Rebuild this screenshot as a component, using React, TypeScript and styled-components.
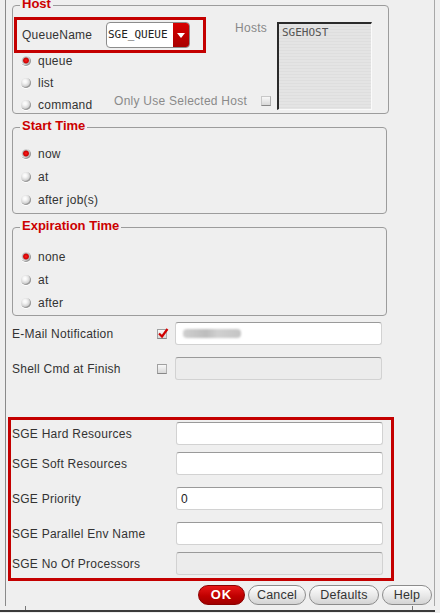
import React from "react";
import styled, { createGlobalStyle } from "styled-components";

const Global = createGlobalStyle`
  html, body { margin: 0; padding: 0; }
  body {
    width: 440px; height: 613px; overflow: hidden;
    background: #efefef;
    font-family: "Liberation Sans", Arial, sans-serif;
    font-size: 12px; color: #333;
  }
`;

const Page = styled.div`
  width: 440px; height: 613px; box-sizing: border-box;
  background: #efefef;
  padding-left: 5px;
  display: flex; flex-direction: column;
`;

const Pane = styled.div`
  width: 430px; height: 606px; box-sizing: border-box;
  border-left: 1px solid #8a8a8a;
  border-right: 1px solid #a8a8a8;
  padding-left: 6px;
  display: flex; flex-direction: column;
  overflow: hidden;
`;

const Footer = styled.div`
  height: 4px; width: 435px; margin-left: -5px;
  border-bottom: 2px solid #3a3a3a;
  display: flex;
`;

const Tick = styled.span<{ $x: number }>`
  width: 1px; height: 4px; background: #777; margin-left: ${p => p.$x}px;
`;

const Frame = styled.div<{ $w: number; $h: number; $mt: number; $pt?: number }>`
  position: relative;
  box-sizing: border-box;
  width: ${p => p.$w}px; height: ${p => p.$h}px;
  margin-top: ${p => p.$mt}px;
  padding-top: ${p => p.$pt ?? 0}px;
  border: 1px solid #9c9c9c;
  border-radius: 4px;
  flex-shrink: 0;
`;

const Legend = styled.span`
  position: absolute; top: -10px; left: 7px;
  padding: 0 2px;
  background: #efefef;
  color: #cc0000; font-weight: bold; font-size: 13px; line-height: 15px;
`;

const HostBody = styled.div`
  display: flex;
`;

const HostLeft = styled.div`
  width: 262px;
  display: flex; flex-direction: column;
`;

const HostTop = styled.div`
  display: flex; margin-top: 11px;
`;

const Highlight = styled.div`
  box-sizing: border-box;
  width: 192px; height: 36px; margin-left: 1px;
  border: 3px solid #c40000;
  display: flex; align-items: center;
  padding-left: 5px; padding-right: 13px;
`;

const Label = styled.span<{ $muted?: boolean }>`
  color: ${p => (p.$muted ? "#8a8a8a" : "#333")};
  white-space: nowrap;
  letter-spacing: 0.25px;
`;

const HostsLabel = styled(Label)`
  margin-left: auto; margin-right: 8px; margin-top: 4px;
  color: #888;
`;

const Select = styled.div`
  margin-left: auto;
  width: 84px; height: 26px; box-sizing: border-box;
  display: flex;
  border: 1px solid #8c8c8c; border-radius: 4px;
  background: #fff; overflow: hidden;
`;

const SelectText = styled.span`
  flex: 1; padding-left: 1px;
  font-family: "DejaVu Sans Mono", "Liberation Mono", monospace; font-size: 11px; color: #222;
  line-height: 24px; white-space: nowrap;
`;

const SelectBtn = styled.span`
  width: 16px; flex-shrink: 0;
  background: linear-gradient(#d80000, #a80000);
  display: flex; align-items: center; justify-content: center;
`;

const RadioList = styled.div<{ $mt?: number; $row: number }>`
  display: flex; flex-direction: column;
  margin-top: ${p => p.$mt ?? 0}px;
  padding-left: 8px;
  & > * { height: ${p => p.$row}px; }
`;

const RadioRow = styled.div`
  display: flex; align-items: center;
`;

const Radio = styled.span<{ $on?: boolean }>`
  width: 10px; height: 10px; border-radius: 50%;
  box-sizing: border-box; flex-shrink: 0;
  margin-right: 7px;
  background: ${p =>
    p.$on
      ? "radial-gradient(circle at 50% 45%, #ff2020 0, #d00000 2.4px, #b8b8b8 3.4px, #f8f8f8 5px)"
      : "radial-gradient(circle at 40% 35%, #ffffff 0, #f4f4f4 2px, #cfcfcf 5px)"};
  box-shadow: inset -1px -1px 0 #999, 0 1px 0 #fff;
`;

const OnlyUse = styled.div`
  margin-left: auto; margin-right: 4px; margin-top: -8px;
  display: flex; align-items: center; gap: 14px;
`;

const Check = styled.span<{ $on?: boolean; $dim?: boolean }>`
  position: relative;
  width: 10px; height: 10px; box-sizing: border-box; flex-shrink: 0;
  border-top: 1px solid ${p => (p.$dim ? "#c8c8c8" : "#a0a0a0")};
  border-left: 1px solid ${p => (p.$dim ? "#c8c8c8" : "#a0a0a0")};
  border-bottom: 1px solid #888;
  border-right: 1px solid #b0b0b0;
  background: linear-gradient(#f8f8f8, #d8d8d8);
  svg { position: absolute; left: -1px; top: -3px; }
`;

const ListBox = styled.div`
  margin-top: 16px; margin-left: 2px;
  width: 95px; height: 88px; box-sizing: border-box;
  border-top: 2px solid #2a2a2a; border-left: 2px solid #2a2a2a;
  border-bottom: 1px solid #fafafa; border-right: 1px solid #fafafa;
  background: repeating-linear-gradient(#e4e4e4 0 2px, #dedede 2px 3px);
  padding: 2px 0 0 3px;
  font-family: "DejaVu Sans Mono", "Liberation Mono", monospace; font-size: 11px; color: #555;
  line-height: 14px;
`;

const FieldRow = styled.div<{ $mt: number; $label: number }>`
  display: grid;
  grid-template-columns: ${p => p.$label}px 18px 207px;
  align-items: center;
  height: 23px;
  margin-top: ${p => p.$mt}px;
  flex-shrink: 0;
`;

const Input = styled.div<{ $disabled?: boolean }>`
  grid-column: 3;
  height: 23px; box-sizing: border-box;
  border: 1px solid #d2d2d2; border-top-color: #9a9a9a;
  border-radius: 3px;
  background: ${p => (p.$disabled ? "#ececec" : "#ffffff")};
  padding-left: 4px;
  display: flex; align-items: center;
  font-size: 12px; color: #222;
`;

const Blur = styled.span`
  width: 58px; height: 9px; border-radius: 4px;
  background: linear-gradient(90deg, #cfcfcf, #bdbdbd 40%, #d0d0d0 60%, #c4c4c4);
  filter: blur(1px);
  margin-left: 3px;
`;

const SgeBox = styled.div`
  margin-top: 37px; margin-left: -4px;
  width: 386px; box-sizing: border-box;
  border: 3px solid #c40000;
  padding: 2px 0 3px 1px;
  display: flex; flex-direction: column;
  flex-shrink: 0;
`;

const Buttons = styled.div`
  display: flex; justify-content: flex-end; gap: 3px;
  margin-top: 4px; padding-right: 2px;
`;

const Button = styled.button<{ $w: number; $primary?: boolean }>`
  width: ${p => p.$w}px; height: 20px; box-sizing: border-box;
  border-radius: 10px;
  border: 1px solid ${p => (p.$primary ? "#8a0000" : "#8c8c8c")};
  background: ${p =>
    p.$primary
      ? "linear-gradient(#e81818, #c00000 55%, #a00000)"
      : "linear-gradient(#fdfdfd, #e8e8e8 55%, #d4d4d4)"};
  color: ${p => (p.$primary ? "#fff" : "#333")};
  font-family: "Liberation Sans", Arial, sans-serif;
  font-size: ${p => (p.$primary ? "13px" : "12.5px")};
  font-weight: ${p => (p.$primary ? "bold" : "normal")};
  letter-spacing: ${p => (p.$primary ? "1px" : "0.2px")};
  padding: 0;
  line-height: 18px;
`;

const CheckMark = () => (
  <svg width="12" height="12" viewBox="0 0 12 12">
    <path d="M2 6.5 L5 9.5 L10.5 2" fill="none" stroke="#d00000" strokeWidth="2.2" />
  </svg>
);

const Caret = () => (
  <svg width="8" height="5" viewBox="0 0 8 5">
    <path d="M0 0 H8 L4 5 Z" fill="#fff" />
  </svg>
);

const RadioGroup: React.FC<{ items: string[]; on: number; row: number }> = ({ items, on, row }) => (
  <RadioList $row={row}>
    {items.map((t, i) => (
      <RadioRow key={t}>
        <Radio $on={i === on} />
        <Label>{t}</Label>
      </RadioRow>
    ))}
  </RadioList>
);

export default function App() {
  return (
    <Page>
      <Global />
      <Pane>
        <Frame $w={377} $h={109} $mt={5}>
          <Legend>Host</Legend>
          <HostBody>
            <HostLeft>
              <HostTop>
                <Highlight>
                  <Label>QueueName</Label>
                  <Select>
                    <SelectText>SGE_QUEUE</SelectText>
                    <SelectBtn><Caret /></SelectBtn>
                  </Select>
                </Highlight>
                <HostsLabel>Hosts</HostsLabel>
              </HostTop>
              <RadioList $mt={-3} $row={22}>
                <RadioRow><Radio $on /><Label>queue</Label></RadioRow>
                <RadioRow><Radio /><Label>list</Label></RadioRow>
                <RadioRow>
                  <Radio /><Label>command</Label>
                  <OnlyUse>
                    <Label $muted>Only Use Selected Host</Label>
                    <Check $dim />
                  </OnlyUse>
                </RadioRow>
              </RadioList>
            </HostLeft>
            <ListBox>SGEHOST</ListBox>
          </HostBody>
        </Frame>

        <Frame $w={375} $h={87} $mt={13} $pt={14}>
          <Legend>Start Time</Legend>
          <RadioGroup items={["now", "at", "after job(s)"]} on={0} row={23} />
        </Frame>

        <Frame $w={375} $h={89} $mt={13} $pt={17}>
          <Legend>Expiration Time</Legend>
          <RadioGroup items={["none", "at", "after"]} on={0} row={23} />
        </Frame>

        <FieldRow $mt={6} $label={145}>
          <Label>E-Mail Notification</Label>
          <Check $on><CheckMark /></Check>
          <Input><Blur /></Input>
        </FieldRow>
        <FieldRow $mt={12} $label={145}>
          <Label>Shell Cmd at Finish</Label>
          <Check />
          <Input $disabled />
        </FieldRow>

        <SgeBox>
          <FieldRow $mt={0} $label={146}>
            <Label>SGE Hard Resources</Label>
            <Input />
          </FieldRow>
          <FieldRow $mt={7} $label={146}>
            <Label>SGE Soft Resources</Label>
            <Input />
          </FieldRow>
          <FieldRow $mt={12} $label={146}>
            <Label>SGE Priority</Label>
            <Input>0</Input>
          </FieldRow>
          <FieldRow $mt={12} $label={146}>
            <Label>SGE Parallel Env Name</Label>
            <Input />
          </FieldRow>
          <FieldRow $mt={7} $label={146}>
            <Label>SGE No Of Processors</Label>
            <Input $disabled />
          </FieldRow>
        </SgeBox>

        <Buttons>
          <Button $w={47} $primary>OK</Button>
          <Button $w={58}>Cancel</Button>
          <Button $w={70}>Defaults</Button>
          <Button $w={50}>Help</Button>
        </Buttons>
      </Pane>
      <Footer>
        <Tick $x={25} />
        <Tick $x={386} />
      </Footer>
    </Page>
  );
}
